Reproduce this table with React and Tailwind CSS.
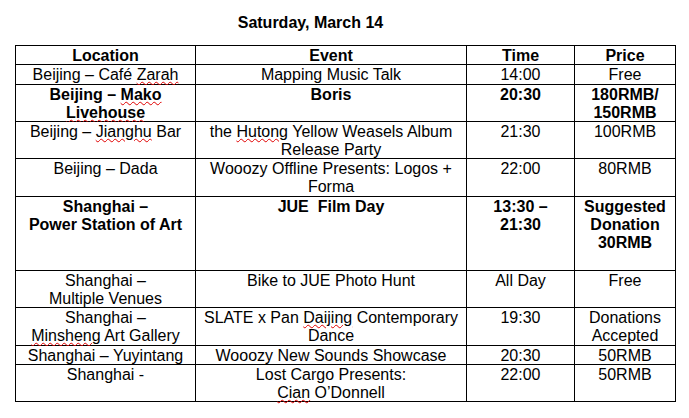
import React from "react";

const sq = "underline decoration-wavy decoration-[#e00000] decoration-1 underline-offset-[1px]";

function Cell({ children, bold }) {
  return (
    <div className={`bg-white text-center whitespace-nowrap leading-[18px] pt-px ${bold ? "font-bold" : ""}`}>
      {children}
    </div>
  );
}

export default function App() {
  return (
    <div
      className="w-[689px] h-[418px] bg-white text-black text-[16px] overflow-hidden"
      style={{ fontFamily: '"Liberation Sans", Arial, sans-serif' }}
    >
      <div className="pt-[14px] w-[621px] text-center font-bold leading-[18px]">Saturday, March 14</div>
      <div className="mt-[13px] ml-[15px] w-[661px] grid grid-cols-[179px_270px_107px_100px] grid-rows-[18px_19px_36px_36px_37px_73px_36px_37px_18px_36px] gap-px bg-black p-px">
        <Cell bold>Location</Cell>
        <Cell bold>Event</Cell>
        <Cell bold>Time</Cell>
        <Cell bold>Price</Cell>

        <Cell>Beijing – Café <span className={sq}>Zarah</span></Cell>
        <Cell>Mapping Music Talk</Cell>
        <Cell>14:00</Cell>
        <Cell>Free</Cell>

        <Cell bold>Beijing – <span className={sq}>Mako</span><br /><span className={sq}>Livehouse</span></Cell>
        <Cell bold>Boris</Cell>
        <Cell bold>20:30</Cell>
        <Cell bold>180RMB/<br />150RMB</Cell>

        <Cell>Beijing – <span className={sq}>Jianghu</span> Bar</Cell>
        <Cell>the <span className={sq}>Hutong</span> Yellow Weasels Album<br />Release Party</Cell>
        <Cell>21:30</Cell>
        <Cell>100RMB</Cell>

        <Cell>Beijing – Dada</Cell>
        <Cell>Wooozy Offline Presents: Logos +<br />Forma</Cell>
        <Cell>22:00</Cell>
        <Cell>80RMB</Cell>

        <Cell bold>Shanghai –<br />Power Station of Art</Cell>
        <Cell bold><span className="whitespace-pre">JUE  Film Day</span></Cell>
        <Cell bold>13:30 –<br />21:30</Cell>
        <Cell bold>Suggested<br />Donation<br />30RMB</Cell>

        <Cell>Shanghai –<br />Multiple Venues</Cell>
        <Cell>Bike to JUE Photo Hunt</Cell>
        <Cell>All Day</Cell>
        <Cell>Free</Cell>

        <Cell>Shanghai –<br /><span className={sq}>Minsheng</span> Art Gallery</Cell>
        <Cell>SLATE x Pan <span className={sq}>Daijing</span> Contemporary<br />Dance</Cell>
        <Cell>19:30</Cell>
        <Cell>Donations<br />Accepted</Cell>

        <Cell>Shanghai – Yuyintang</Cell>
        <Cell>Wooozy New Sounds Showcase</Cell>
        <Cell>20:30</Cell>
        <Cell>50RMB</Cell>

        <Cell>Shanghai -</Cell>
        <Cell>Lost Cargo Presents:<br /><span className={sq}>Cian</span> O’Donnell</Cell>
        <Cell>22:00</Cell>
        <Cell>50RMB</Cell>
      </div>
    </div>
  );
}
